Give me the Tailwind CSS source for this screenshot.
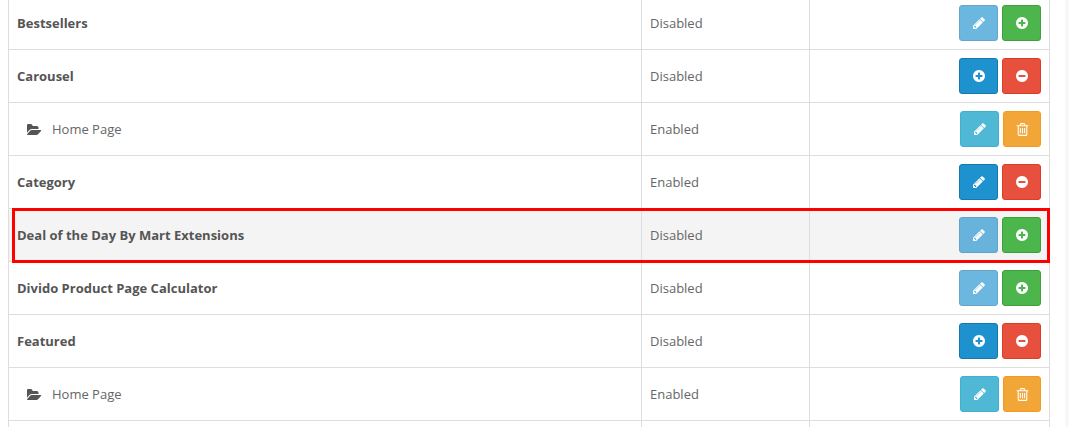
<!DOCTYPE html>
<html lang="en">
<head>
    <meta charset="UTF-8">
    <meta name="viewport" content="width=device-width, initial-scale=1.0">
    <title>Modules</title>
    <script src="https://cdn.jsdelivr.net/npm/@tailwindcss/browser@4"></script>
</head>
<body class="bg-white font-['Open_Sans',sans-serif] text-[13px] text-[#666]">
    <!-- shared icons (Font Awesome 4 shapes) -->
    <svg class="hidden">
        <symbol id="pencil" viewBox="0 0 1792 1792"><path fill="currentColor" d="M491 1536l91-91-235-235-91 91v107h128v128h107zm523-928q0-22-22-22-10 0-17 7l-542 542q-7 7-7 17 0 22 22 22 10 0 17-7l542-542q7-7 7-17zm-54-192l416 416-832 832h-416v-416zm683 96q0 53-37 90l-166 166-416-416 166-165q36-38 90-38 53 0 91 38l235 234q37 39 37 91z"/></symbol>
        <symbol id="plus" viewBox="0 0 1792 1792"><path fill="currentColor" d="M1344 960v-128q0-26-19-45t-45-19h-256v-256q0-26-19-45t-45-19h-128q-26 0-45 19t-19 45v256h-256q-26 0-45 19t-19 45v128q0 26 19 45t45 19h256v256q0 26 19 45t45 19h128q26 0 45-19t19-45v-256h256q26 0 45-19t19-45zm320-64q0 209-103 385.5t-279.5 279.5-385.5 103-385.5-103-279.5-279.5-103-385.5 103-385.5 279.5-279.5 385.5-103 385.5 103 279.5 279.5 103 385.5z"/></symbol>
        <symbol id="minus" viewBox="0 0 1792 1792"><path fill="currentColor" d="M1344 960v-128q0-26-19-45t-45-19h-768q-26 0-45 19t-19 45v128q0 26 19 45t45 19h768q26 0 45-19t19-45zm320-64q0 209-103 385.5t-279.5 279.5-385.5 103-385.5-103-279.5-279.5-103-385.5 103-385.5 279.5-279.5 385.5-103 385.5 103 279.5 279.5 103 385.5z"/></symbol>
        <symbol id="trash" viewBox="0 0 1792 1792"><path fill="currentColor" d="M704 736v576q0 14-9 23t-23 9h-64q-14 0-23-9t-9-23v-576q0-14 9-23t23-9h64q14 0 23 9t9 23zm256 0v576q0 14-9 23t-23 9h-64q-14 0-23-9t-9-23v-576q0-14 9-23t23-9h64q14 0 23 9t9 23zm256 0v576q0 14-9 23t-23 9h-64q-14 0-23-9t-9-23v-576q0-14 9-23t23-9h64q14 0 23 9t9 23zm128 724v-948h-896v948q0 22 7 40.5t14.5 27 10.5 8.5h832q3 0 10.5-8.5t14.5-27 7-40.5zm-672-1076h448l-48-117q-7-9-17-11h-317q-10 2-17 11zm928 32v64q0 14-9 23t-23 9h-96v948q0 83-47 143.5t-113 60.5h-832q-66 0-113-58.5t-47-141.5v-952h-96q-14 0-23-9t-9-23v-64q0-14 9-23t23-9h309l70-167q15-37 54-63t79-26h320q40 0 79 26t54 63l70 167h309q14 0 23 9t9 23z"/></symbol>
        <symbol id="folder" viewBox="0 0 1920 1792"><path fill="currentColor" d="M1815 952q0 31-31 66l-336 396q-43 51-120.5 86.5t-143.5 35.5h-1088q-34 0-60.5-13t-26.5-43q0-31 31-66l336-396q43-51 120.5-86.5t143.5-35.5h1088q34 0 60.5 13t26.5 43zm-343-344v160h-832q-94 0-197 47.5t-164 119.5l-337 396-5 6q0-4-.5-12.5t-.5-12.5v-960q0-92 66-158t158-66h320q92 0 158 66t66 158v32h544q92 0 158 66t66 158z"/></symbol>
    </svg>

    <div class="flex h-[427px] overflow-hidden">
        <div class="relative flex-1 overflow-hidden pl-2 pr-[15px]">
            <table class="w-full table-fixed border-collapse -mt-1">
                <colgroup>
                    <col class="w-[633px]">
                    <col class="w-[168px]">
                    <col>
                </colgroup>
                <tbody>
                    <tr class="h-[53px]">
                        <td class="border border-[#ddd] px-2 pt-0.5 font-bold text-[#555]">Bestsellers</td>
                        <td class="border border-[#ddd] px-2 pt-0.5">Disabled</td>
                        <td class="border border-[#ddd] px-2">
                            <div class="flex justify-end gap-1">
                                <button class="w-[39px] h-[36px] flex items-center justify-center rounded-[3px] border border-[#1978ab] bg-[#1e91cf] opacity-65 text-white"><svg class="w-[14px] h-[14px]"><use href="#pencil"/></svg></button>
                                <button class="w-[39px] h-[36px] flex items-center justify-center rounded-[3px] border border-[#3ca03c] bg-[#4cb64c] text-white"><svg class="w-[14px] h-[14px]"><use href="#plus"/></svg></button>
                            </div>
                        </td>
                    </tr>
                    <tr class="h-[53px]">
                        <td class="border border-[#ddd] px-2 pt-0.5 font-bold text-[#555]">Carousel</td>
                        <td class="border border-[#ddd] px-2 pt-0.5">Disabled</td>
                        <td class="border border-[#ddd] px-2">
                            <div class="flex justify-end gap-1">
                                <button class="w-[39px] h-[36px] flex items-center justify-center rounded-[3px] border border-[#1978ab] bg-[#1e91cf] text-white"><svg class="w-[14px] h-[14px]"><use href="#plus"/></svg></button>
                                <button class="w-[39px] h-[36px] flex items-center justify-center rounded-[3px] border border-[#dd3c27] bg-[#e7503c] text-white"><svg class="w-[14px] h-[14px]"><use href="#minus"/></svg></button>
                            </div>
                        </td>
                    </tr>
                    <tr class="h-[53px]">
                        <td class="border border-[#ddd] px-2 pt-0.5">
                            <div class="flex items-center pl-2.5 gap-2.5"><svg class="w-[15px] h-[14px] text-[#555]"><use href="#folder"/></svg>Home Page</div>
                        </td>
                        <td class="border border-[#ddd] px-2 pt-0.5">Enabled</td>
                        <td class="border border-[#ddd] px-2">
                            <div class="flex justify-end gap-1">
                                <button class="w-[39px] h-[36px] flex items-center justify-center rounded-[3px] border border-[#3fb0cf] bg-[#4fb8d4] text-white"><svg class="w-[14px] h-[14px]"><use href="#pencil"/></svg></button>
                                <button class="w-[38px] h-[36px] flex items-center justify-center rounded-[3px] border border-[#f39b1e] bg-[#f3a638] text-white"><svg class="w-[15px] h-[15px]"><use href="#trash"/></svg></button>
                            </div>
                        </td>
                    </tr>
                    <tr class="h-[53px]">
                        <td class="border border-[#ddd] px-2 pt-0.5 font-bold text-[#555]">Category</td>
                        <td class="border border-[#ddd] px-2 pt-0.5">Enabled</td>
                        <td class="border border-[#ddd] px-2">
                            <div class="flex justify-end gap-1">
                                <button class="w-[39px] h-[36px] flex items-center justify-center rounded-[3px] border border-[#1978ab] bg-[#1e91cf] text-white"><svg class="w-[14px] h-[14px]"><use href="#pencil"/></svg></button>
                                <button class="w-[39px] h-[36px] flex items-center justify-center rounded-[3px] border border-[#dd3c27] bg-[#e7503c] text-white"><svg class="w-[14px] h-[14px]"><use href="#minus"/></svg></button>
                            </div>
                        </td>
                    </tr>
                    <tr class="h-[53px] bg-[#f4f4f4]">
                        <td class="border border-[#ddd] px-2 pt-0.5 font-bold text-[#555]">Deal of the Day By Mart Extensions</td>
                        <td class="border border-[#ddd] px-2 pt-0.5">Disabled</td>
                        <td class="border border-[#ddd] px-2">
                            <div class="flex justify-end gap-1">
                                <button class="w-[39px] h-[36px] flex items-center justify-center rounded-[3px] border border-[#1978ab] bg-[#1e91cf] opacity-65 text-white"><svg class="w-[14px] h-[14px]"><use href="#pencil"/></svg></button>
                                <button class="w-[39px] h-[36px] flex items-center justify-center rounded-[3px] border border-[#3ca03c] bg-[#4cb64c] text-white"><svg class="w-[14px] h-[14px]"><use href="#plus"/></svg></button>
                            </div>
                        </td>
                    </tr>
                    <tr class="h-[53px]">
                        <td class="border border-[#ddd] px-2 pt-0.5 font-bold text-[#555]">Divido Product Page Calculator</td>
                        <td class="border border-[#ddd] px-2 pt-0.5">Disabled</td>
                        <td class="border border-[#ddd] px-2">
                            <div class="flex justify-end gap-1">
                                <button class="w-[39px] h-[36px] flex items-center justify-center rounded-[3px] border border-[#1978ab] bg-[#1e91cf] opacity-65 text-white"><svg class="w-[14px] h-[14px]"><use href="#pencil"/></svg></button>
                                <button class="w-[39px] h-[36px] flex items-center justify-center rounded-[3px] border border-[#3ca03c] bg-[#4cb64c] text-white"><svg class="w-[14px] h-[14px]"><use href="#plus"/></svg></button>
                            </div>
                        </td>
                    </tr>
                    <tr class="h-[53px]">
                        <td class="border border-[#ddd] px-2 pt-0.5 font-bold text-[#555]">Featured</td>
                        <td class="border border-[#ddd] px-2 pt-0.5">Disabled</td>
                        <td class="border border-[#ddd] px-2">
                            <div class="flex justify-end gap-1">
                                <button class="w-[39px] h-[36px] flex items-center justify-center rounded-[3px] border border-[#1978ab] bg-[#1e91cf] text-white"><svg class="w-[14px] h-[14px]"><use href="#plus"/></svg></button>
                                <button class="w-[39px] h-[36px] flex items-center justify-center rounded-[3px] border border-[#dd3c27] bg-[#e7503c] text-white"><svg class="w-[14px] h-[14px]"><use href="#minus"/></svg></button>
                            </div>
                        </td>
                    </tr>
                    <tr class="h-[53px]">
                        <td class="border border-[#ddd] px-2 pt-0.5">
                            <div class="flex items-center pl-2.5 gap-2.5"><svg class="w-[15px] h-[14px] text-[#555]"><use href="#folder"/></svg>Home Page</div>
                        </td>
                        <td class="border border-[#ddd] px-2 pt-0.5">Enabled</td>
                        <td class="border border-[#ddd] px-2">
                            <div class="flex justify-end gap-1">
                                <button class="w-[39px] h-[36px] flex items-center justify-center rounded-[3px] border border-[#3fb0cf] bg-[#4fb8d4] text-white"><svg class="w-[14px] h-[14px]"><use href="#pencil"/></svg></button>
                                <button class="w-[38px] h-[36px] flex items-center justify-center rounded-[3px] border border-[#f39b1e] bg-[#f3a638] text-white"><svg class="w-[15px] h-[15px]"><use href="#trash"/></svg></button>
                            </div>
                        </td>
                    </tr>
                    <tr class="h-[53px]">
                        <td class="border border-[#ddd]"></td>
                        <td class="border border-[#ddd]"></td>
                        <td class="border border-[#ddd]"></td>
                    </tr>
                </tbody>
            </table>
            <!-- red highlight drawn over the row -->
            <div class="absolute left-3 top-[208px] w-[1038px] h-[55px] border-[3px] border-[#f00]"></div>
        </div>
        <div class="w-1 bg-[#f8f8f8]"></div>
    </div>
</body>
</html>
